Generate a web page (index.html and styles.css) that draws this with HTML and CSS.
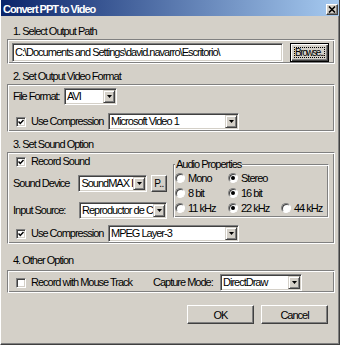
FILE: index.html
```html
<!DOCTYPE html>
<html lang="en">
<head>
    <meta charset="utf-8">
    <title>Convert PPT to Video</title>
    <link rel="stylesheet" href="styles.css">
</head>
<body>
    <div class="window">
        <div class="titlebar">
            <span class="title">Convert PPT to Video</span>
            <span class="close-btn">
                <svg width="8" height="7" viewBox="0 0 8 7"><path d="M1 0.5 L7 6.5 M7 0.5 L1 6.5" stroke="#000" stroke-width="1.6"/></svg>
            </span>
        </div>

        <div class="content">
            <!-- 1. output path -->
            <div class="section-label first">1. Select Output Path</div>
            <div class="group group-path">
                <div class="textbox">C:\Documents and Settings\david.navarro\Escritorio\</div>
                <div class="btn btn-default"><span class="focus-rect">Browse...</span></div>
            </div>

            <!-- 2. video format -->
            <div class="section-label">2. Set Output Video Format</div>
            <div class="group group-video">
                <div class="row">
                    <span class="lbl lbl-format">File Format:</span>
                    <div class="combo combo-format">
                        <span class="combo-val">AVI</span>
                        <span class="combo-arrow"><svg width="5" height="3" viewBox="0 0 5 3"><polygon points="0,0 5,0 2.5,3" fill="#000"/></svg></span>
                    </div>
                </div>
                <div class="row">
                    <span class="checkbox"><svg width="6" height="6" viewBox="0 0 6 6"><path d="M0.5 2.5 L2.3 4.5 L5.5 1" fill="none" stroke="#000" stroke-width="1.5"/></svg></span>
                    <span class="lbl lbl-compress">Use Compression</span>
                    <div class="combo combo-codec">
                        <span class="combo-val">Microsoft Video 1</span>
                        <span class="combo-arrow"><svg width="5" height="3" viewBox="0 0 5 3"><polygon points="0,0 5,0 2.5,3" fill="#000"/></svg></span>
                    </div>
                </div>
            </div>

            <!-- 3. sound -->
            <div class="section-label">3. Set Sound Option</div>
            <div class="group group-sound">
                <div class="sound-top">
                    <div class="sound-left">
                        <div class="row check-row">
                            <span class="checkbox"><svg width="6" height="6" viewBox="0 0 6 6"><path d="M0.5 2.5 L2.3 4.5 L5.5 1" fill="none" stroke="#000" stroke-width="1.5"/></svg></span>
                            <span class="lbl">Record Sound</span>
                        </div>
                        <div class="row device-row">
                            <span class="lbl lbl-device">Sound Device</span>
                            <div class="combo combo-device">
                                <span class="combo-val">SoundMAX I</span>
                                <span class="combo-arrow"><svg width="5" height="3" viewBox="0 0 5 3"><polygon points="0,0 5,0 2.5,3" fill="#000"/></svg></span>
                            </div>
                            <div class="btn btn-small">P..</div>
                        </div>
                        <div class="row input-row">
                            <span class="lbl lbl-device">Input Source:</span>
                            <div class="combo combo-input">
                                <span class="combo-val">Reproductor de C</span>
                                <span class="combo-arrow"><svg width="5" height="3" viewBox="0 0 5 3"><polygon points="0,0 5,0 2.5,3" fill="#000"/></svg></span>
                            </div>
                        </div>
                    </div>

                    <div class="audio-box">
                        <span class="audio-legend">Audio Properties</span>
                        <div class="radio-grid">
                            <label class="opt"><span class="radio"></span>Mono</label>
                            <label class="opt"><span class="radio on"></span>Stereo</label>
                            <span></span>
                            <label class="opt"><span class="radio"></span>8 bit</label>
                            <label class="opt"><span class="radio on"></span>16 bit</label>
                            <span></span>
                            <label class="opt"><span class="radio"></span>11 kHz</label>
                            <label class="opt"><span class="radio on"></span>22 kHz</label>
                            <label class="opt"><span class="radio"></span>44 kHz</label>
                        </div>
                    </div>
                </div>
                <div class="row sound-compress">
                    <span class="checkbox"><svg width="6" height="6" viewBox="0 0 6 6"><path d="M0.5 2.5 L2.3 4.5 L5.5 1" fill="none" stroke="#000" stroke-width="1.5"/></svg></span>
                    <span class="lbl lbl-compress">Use Compression</span>
                    <div class="combo combo-codec">
                        <span class="combo-val">MPEG Layer-3</span>
                        <span class="combo-arrow"><svg width="5" height="3" viewBox="0 0 5 3"><polygon points="0,0 5,0 2.5,3" fill="#000"/></svg></span>
                    </div>
                </div>
            </div>

            <!-- 4. other -->
            <div class="section-label last">4. Other Option</div>
            <div class="group group-other">
                <div class="row">
                    <span class="checkbox unchecked"></span>
                    <span class="lbl lbl-mouse">Record with Mouse Track</span>
                    <span class="lbl lbl-capture">Capture Mode:</span>
                    <div class="combo combo-capture">
                        <span class="combo-val">DirectDraw</span>
                        <span class="combo-arrow"><svg width="5" height="3" viewBox="0 0 5 3"><polygon points="0,0 5,0 2.5,3" fill="#000"/></svg></span>
                    </div>
                </div>
            </div>

            <div class="buttons">
                <div class="btn btn-main">OK</div>
                <div class="btn btn-main">Cancel</div>
            </div>
        </div>
    </div>
</body>
</html>
```

FILE: styles.css
```css
* {
    box-sizing: border-box;
}

body {
    margin: 0;
    font-family: "Liberation Sans", Arial, sans-serif;
    font-size: 11px;
    letter-spacing: -1px;
    color: #000;
    background-color: #d4d0c8;
}

.window {
    width: 340px;
    height: 345px;
    background-color: #d4d0c8;
    border-left: 1px solid #ffffff;
    border-right: 1px solid #404040;
    border-bottom: 1px solid #404040;
    box-shadow: inset -1px -1px #808080;
}

.titlebar {
    height: 16px;
    display: flex;
    align-items: center;
    justify-content: space-between;
    padding: 2px 1px 0 2px;
    background: linear-gradient(to right, #0a246a, #a6caf0);
    color: #ffffff;
    font-weight: bold;
    line-height: 13px;
}

.close-btn {
    width: 12px;
    height: 11px;
    display: flex;
    align-items: center;
    justify-content: center;
    background-color: #d4d0c8;
    border: 1px solid;
    border-color: #ffffff #404040 #404040 #ffffff;
    box-shadow: inset -1px -1px #808080;
}

.content {
    padding: 0 4px 0 6px;
}

.section-label {
    height: 14px;
    line-height: 14px;
    margin: 5px 0 1px;
    padding-left: 6px;
}

.section-label.first {
    margin-top: 8px;
}

.section-label.last {
    margin: 9px 0 3px;
}

/* etched frame */
.group {
    border: 1px solid;
    border-color: #808080 #ffffff #ffffff #808080;
    box-shadow: inset 1px 1px #ffffff, inset -1px -1px #808080;
    padding: 3px 3px 1px 5px;
}

.group-path {
    display: flex;
    padding-left: 4px;
}

.row {
    display: flex;
    align-items: center;
    height: 17px;
    white-space: nowrap;
}

.lbl {
    line-height: 13px;
    white-space: nowrap;
}

.textbox,
.combo {
    background-color: #ffffff;
    border: 1px solid;
    border-color: #808080 #ffffff #ffffff #808080;
    box-shadow: inset 1px 1px #404040, inset -1px -1px #d4d0c8;
}

.textbox {
    width: 271px;
    height: 19px;
    padding: 0 2px;
    line-height: 17px;
    white-space: nowrap;
    overflow: hidden;
}

.combo {
    display: flex;
    height: 17px;
    padding: 1px;
}

.combo-val {
    flex: 1;
    padding-left: 1px;
    line-height: 13px;
    overflow: hidden;
    white-space: nowrap;
}

.combo-arrow {
    width: 12px;
    height: 13px;
    flex-shrink: 0;
    display: flex;
    align-items: center;
    justify-content: center;
    background-color: #d4d0c8;
    border: 1px solid;
    border-color: #d4d0c8 #404040 #404040 #d4d0c8;
    box-shadow: inset 1px 1px #ffffff, inset -1px -1px #808080;
}

.btn {
    display: flex;
    align-items: center;
    justify-content: center;
    background-color: #d4d0c8;
    border: 1px solid;
    border-color: #ffffff #404040 #404040 #ffffff;
    box-shadow: inset -1px -1px #808080, inset 1px 1px #d4d0c8;
    white-space: nowrap;
    overflow: hidden;
}

.btn-default {
    width: 39px;
    height: 19px;
    margin-left: 7px;
    border-color: #000;
    box-shadow: inset 1px 1px #ffffff, inset -1px -1px #404040, inset -2px -2px #808080;
}

.focus-rect {
    flex: 1;
    align-self: stretch;
    margin: 3px;
    border: 1px dotted #000;
    font-size: 10px;
    line-height: 9px;
    text-align: center;
    overflow: hidden;
    letter-spacing: -1.4px;
}

.btn-small {
    width: 16px;
    height: 17px;
    margin-left: 4px;
    font-size: 10px;
    letter-spacing: -0.5px;
}

.btn-main {
    width: 67px;
    height: 19px;
}

.checkbox {
    width: 10px;
    height: 10px;
    margin: 0 5px 0 3px;
    display: flex;
    align-items: center;
    justify-content: center;
    background-color: #ffffff;
    border: 1px solid;
    border-color: #808080 #ffffff #ffffff #808080;
    box-shadow: inset 1px 1px #404040, inset -1px -1px #d4d0c8;
    flex-shrink: 0;
}

/* video group */
.group-video .row + .row {
    margin-top: 8px;
}

.lbl-format {
    width: 51px;
}

.combo-format {
    width: 53px;
}

.lbl-compress {
    width: 77px;
}

.combo-codec {
    width: 131px;
}

/* sound group */
.group-sound {
    padding-top: 2px;
}

.sound-top {
    display: flex;
    gap: 6px;
}

.sound-left {
    width: 154px;
}

.check-row {
    height: 13px;
}

.device-row {
    margin-top: 7px;
}

.input-row {
    margin-top: 10px;
}

.lbl-device {
    width: 66px;
}

.combo-device {
    width: 69px;
}

.combo-input {
    width: 88px;
}

.audio-box {
    position: relative;
    width: 156px;
    height: 54px;
    margin-top: 9px;
    padding: 6px 0 0 1px;
    border: 1px solid;
    border-color: #808080 #ffffff #ffffff #808080;
    box-shadow: inset 1px 1px #ffffff, inset -1px -1px #808080;
}

.audio-legend {
    position: absolute;
    top: -7px;
    left: 1px;
    padding: 0 1px;
    line-height: 13px;
    background-color: #d4d0c8;
}

.radio-grid {
    display: grid;
    grid-template-columns: 53px 53px auto;
    grid-auto-rows: 13px;
    row-gap: 2px;
}

.opt {
    display: flex;
    align-items: center;
    gap: 3px;
    white-space: nowrap;
}

.radio {
    width: 10px;
    height: 10px;
    border-radius: 50%;
    display: flex;
    align-items: center;
    justify-content: center;
    background-color: #ffffff;
    border: 1px solid;
    border-color: #808080 #ffffff #ffffff #808080;
    box-shadow: inset 1px 1px #404040;
}

.radio.on::after {
    content: "";
    width: 4px;
    height: 4px;
    border-radius: 50%;
    background-color: #000;
}

.sound-compress {
    margin-top: 6px;
}

/* other group */
.lbl-mouse {
    width: 122px;
}

.lbl-capture {
    width: 67px;
}

.combo-capture {
    width: 82px;
}

.buttons {
    display: flex;
    justify-content: flex-end;
    gap: 7px;
    margin-top: 12px;
    padding-right: 7px;
}
```
